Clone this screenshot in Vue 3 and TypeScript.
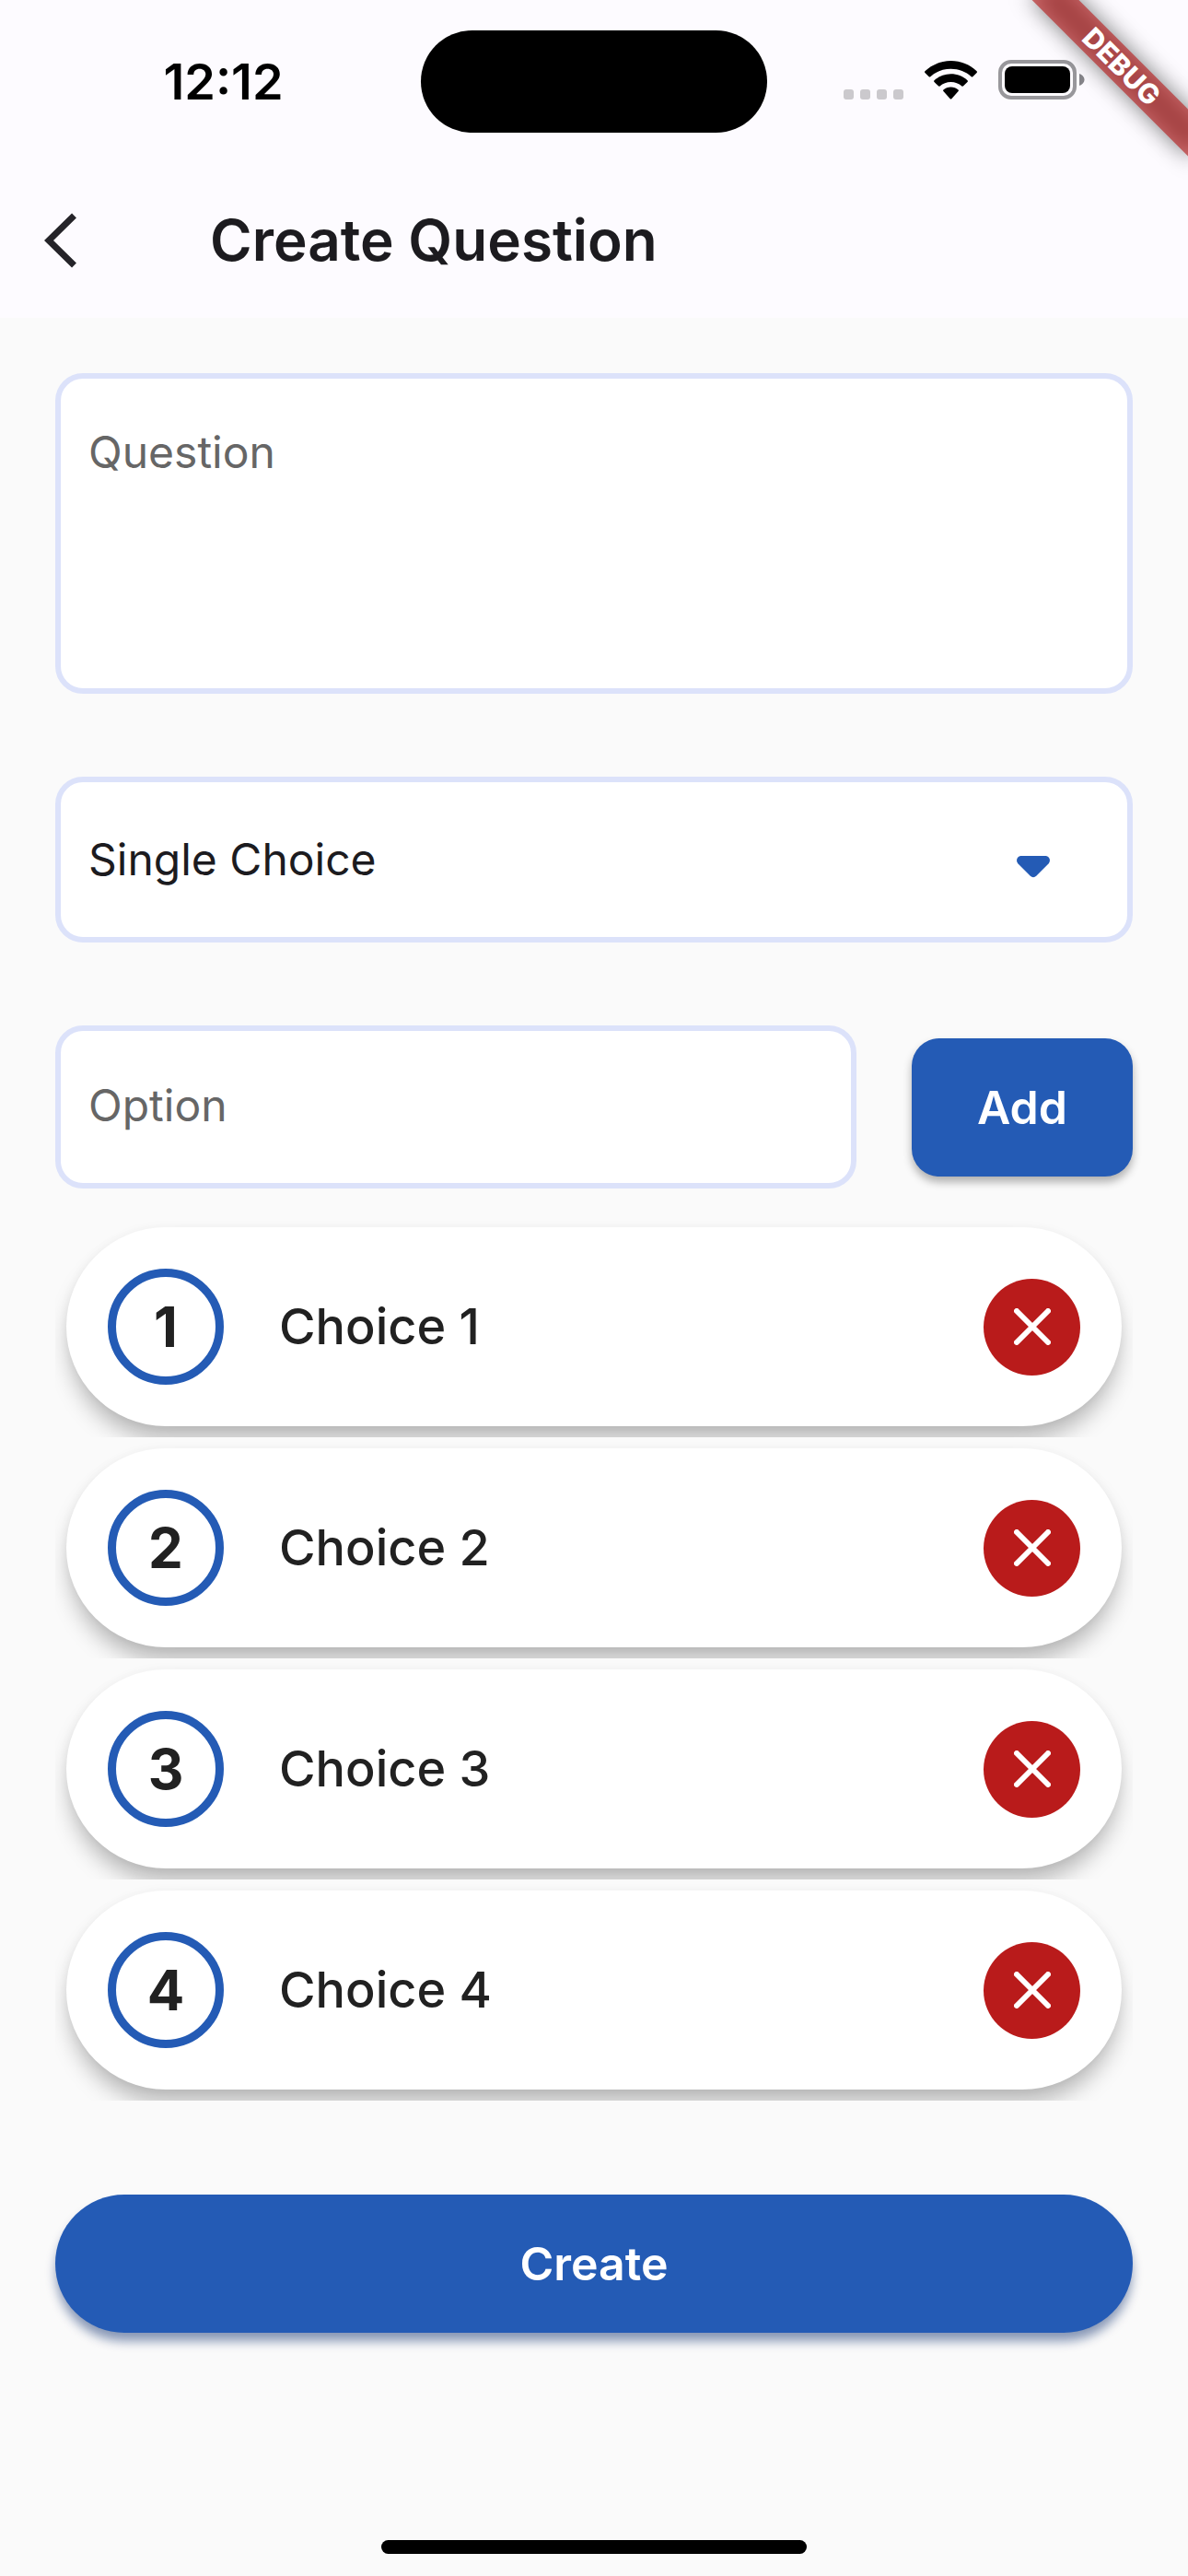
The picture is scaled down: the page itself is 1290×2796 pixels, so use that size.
<script setup lang="ts">
import { ref } from 'vue'

interface Choice {
  id: number
  label: string
}

const question = ref('')
const questionType = ref('single')
const option = ref('')
const choices = ref<Choice[]>([
  { id: 1, label: 'Choice 1' },
  { id: 2, label: 'Choice 2' },
  { id: 3, label: 'Choice 3' },
  { id: 4, label: 'Choice 4' },
])

function addChoice(): void {
  const label = option.value.trim()
  if (!label) return
  choices.value.push({ id: Date.now(), label })
  option.value = ''
}

function removeChoice(id: number): void {
  choices.value = choices.value.filter((choice) => choice.id !== id)
}
</script>

<template>
  <div class="screen">
    <div class="status-bar">
      <span class="time">12:12</span>
      <span class="island"></span>
      <div class="indicators">
        <svg class="signal" width="65" height="11" viewBox="0 0 65 11" aria-hidden="true">
          <rect v-for="n in 4" :key="n" :x="(n - 1) * 18" y="0" width="11" height="11" rx="3" fill="#cbc9cd" />
        </svg>
        <svg class="wifi" width="57" height="42" viewBox="0 0 57 42" aria-hidden="true">
          <path d="M28.5 0C39.3 0 49.3 4.2 56.6 11.2Q57.4 12 56.6 12.9L52.3 17.2Q51.5 18 50.7 17.2C44.9 11.9 37.1 8.8 28.5 8.8C19.9 8.8 12.1 11.9 6.3 17.2Q5.5 18 4.7 17.2L0.4 12.9Q-0.4 12 0.4 11.2C7.7 4.2 17.7 0 28.5 0Z" />
          <path d="M28.5 14.3C35.4 14.3 41.7 16.9 46.5 21.2Q47.4 22.1 46.5 23L42.1 27.3Q41.3 28.1 40.4 27.4C37.2 24.7 33 23 28.5 23C24 23 19.8 24.7 16.6 27.4Q15.7 28.1 14.9 27.3L10.5 23Q9.6 22.1 10.5 21.2C15.3 16.9 21.6 14.3 28.5 14.3Z" />
          <path d="M28.5 28.5C31.6 28.5 34.4 29.5 36.6 31.4Q37.4 32.3 36.6 33.1L29.3 41.2Q28.5 42 27.7 41.2L20.4 33.1Q19.6 32.3 20.4 31.4C22.6 29.5 25.4 28.5 28.5 28.5Z" />
        </svg>
        <svg class="battery" width="95" height="43" viewBox="0 0 95 43" aria-hidden="true">
          <rect x="2" y="2" width="81" height="39" rx="12" fill="none" stroke="#98979b" stroke-width="4" />
          <rect x="7" y="7" width="71" height="29" rx="8" />
          <path d="M88 15C91 16 93.5 18.5 93.5 21.5C93.5 24.5 91 27 88 28Z" fill="#858489" />
        </svg>
      </div>
    </div>

    <header class="app-bar">
      <button class="back" type="button" aria-label="Back">
        <svg width="36" height="60" viewBox="0 0 36 60" aria-hidden="true">
          <path d="M32.5 3L5 30L32.5 57" fill="none" stroke="#252429" stroke-width="7" />
        </svg>
      </button>
      <h1>Create Question</h1>
    </header>

    <form class="form" @submit.prevent>
      <textarea v-model="question" class="field question" placeholder="Question" aria-label="Question"></textarea>

      <div class="select-wrap">
        <select v-model="questionType" class="field type" aria-label="Question type">
          <option value="single">Single Choice</option>
          <option value="multiple">Multiple Choice</option>
        </select>
        <svg class="caret" width="36" height="24" viewBox="0 0 36 24" aria-hidden="true">
          <path d="M5 0H31C35.5 0 37.5 5 34.5 8.5L21.5 21.5Q18 25 14.5 21.5L1.5 8.5C-1.5 5 0.5 0 5 0Z" fill="#245bb5" />
        </svg>
      </div>

      <div class="option-row">
        <input v-model="option" class="field option" type="text" placeholder="Option" aria-label="Option" />
        <button class="add" type="button" @click="addChoice">Add</button>
      </div>

      <ul class="choices">
        <li v-for="(choice, index) in choices" :key="choice.id" class="choice">
          <div class="card">
            <span class="number">{{ index + 1 }}</span>
            <span class="label">{{ choice.label }}</span>
            <button class="remove" type="button" :aria-label="`Remove ${choice.label}`" @click="removeChoice(choice.id)">
              <svg width="40" height="40" viewBox="0 0 40 40" aria-hidden="true">
                <path d="M3 3L37 37M37 3L3 37" stroke="#fff" stroke-width="6" stroke-linecap="round" />
              </svg>
            </button>
          </div>
        </li>
      </ul>

      <button class="create" type="submit">Create</button>
    </form>

    <div class="home-indicator"></div>

    <div class="banner-corner" aria-hidden="true">
      <div class="banner">DEBUG</div>
    </div>
  </div>
</template>

<style>
body {
  margin: 0;
  background: #fafafa;
}
</style>

<style scoped>
.screen {
  position: relative;
  display: flex;
  flex-direction: column;
  min-height: 100vh;
  background: #fafafa;
  color: #1c1b1f;
  font-family: Inter, 'Liberation Sans', sans-serif;
}

.screen *,
.screen *::before {
  box-sizing: border-box;
}

button,
input,
select,
textarea {
  margin: 0;
  border: 0;
  font: inherit;
}

button {
  padding: 0;
  cursor: pointer;
}

.status-bar {
  display: grid;
  grid-template-columns: 1fr 376px 1fr;
  align-items: center;
  height: 177px;
  background: #fdfbff;
}

.time {
  padding-left: 28px;
  color: #000;
  font-size: 54px;
  font-weight: 600;
  line-height: 64px;
  text-align: center;
}

.island {
  height: 111px;
  border-radius: 56px;
  background: #000;
}

.indicators {
  display: flex;
  align-items: flex-end;
  justify-content: flex-end;
  padding: 0 111px 4px 0;
}

.wifi {
  margin: 0 23px;
}

.app-bar {
  display: flex;
  align-items: center;
  height: 168px;
  background: #fdfbff;
}

.back {
  display: flex;
  align-items: center;
  width: 228px;
  height: 144px;
  padding-left: 48px;
  background: none;
}

h1 {
  margin: 0;
  font-size: 62px;
  font-weight: 600;
  line-height: 72px;
}

.form {
  display: flex;
  flex-direction: column;
  padding: 60px 60px 90px;
}

.field {
  display: block;
  width: 100%;
  border: 6px solid #dce2fa;
  border-radius: 30px;
  background: #fff;
  color: #1c1b1f;
  font-size: 48px;
  line-height: 64px;
  outline: none;
}

.field::placeholder {
  color: #666;
  opacity: 1;
}

.question {
  height: 348px;
  padding: 48px 30px;
  resize: none;
}

.select-wrap {
  position: relative;
  margin: 90px 0;
}

.type {
  height: 180px;
  padding: 0 120px 0 30px;
  appearance: none;
}

.caret {
  position: absolute;
  top: 86px;
  right: 90px;
  pointer-events: none;
}

.option-row {
  display: flex;
  align-items: center;
  gap: 60px;
}

.option {
  flex: 1;
  min-width: 0;
  height: 177px;
  padding: 0 30px 4px;
}

.add,
.create {
  height: 150px;
  background: #245bb5;
  color: #fff;
  font-size: 50px;
  font-weight: 600;
  line-height: 64px;
}

.add {
  width: 240px;
  border-radius: 30px;
  box-shadow: 0 6px 10px rgba(0, 0, 0, 0.3);
}

.choices {
  margin: 30px 0 102px;
  padding: 0;
  list-style: none;
}

.choice {
  overflow: hidden;
  padding: 12px;
}

.card {
  display: flex;
  align-items: center;
  height: 216px;
  padding: 0 45px;
  border-radius: 108px;
  background: #fff;
  box-shadow:
    0 18px 24px -4px rgba(0, 0, 0, 0.27),
    0 0 12px rgba(0, 0, 0, 0.04);
  color: #212121;
}

.number {
  display: flex;
  align-items: center;
  justify-content: center;
  width: 126px;
  height: 126px;
  border: 9px solid #245bb5;
  border-radius: 50%;
  font-size: 60px;
  font-weight: 700;
}

.label {
  flex: 1;
  margin-left: 60px;
  font-size: 54px;
  font-weight: 500;
  line-height: 72px;
}

.remove {
  display: flex;
  align-items: center;
  justify-content: center;
  width: 105px;
  height: 105px;
  border-radius: 50%;
  background: #b91b1b;
}

.create {
  border-radius: 75px;
  box-shadow: 0 10px 12px -1px rgba(5, 39, 104, 0.47);
}

.home-indicator {
  width: 462px;
  height: 15px;
  margin: auto auto 24px;
  border-radius: 8px;
  background: #000;
}

.banner-corner {
  position: absolute;
  top: 0;
  right: 0;
  width: 240px;
  height: 240px;
  overflow: hidden;
  pointer-events: none;
}

.banner {
  position: absolute;
  top: 54px;
  right: -48px;
  width: 240px;
  height: 36px;
  color: #fff;
  font-size: 30px;
  font-weight: 800;
  line-height: 36px;
  text-align: center;
  transform: rotate(45deg);
}

/* The translucent band sits over its own blurred shadow. */
.banner::before,
.banner::after {
  position: absolute;
  inset: 0;
  content: '';
}

.banner::before {
  z-index: -2;
  background: rgba(0, 0, 0, 0.5);
  filter: blur(12px);
}

.banner::after {
  z-index: -1;
  background: rgba(183, 28, 28, 0.63);
}
</style>
